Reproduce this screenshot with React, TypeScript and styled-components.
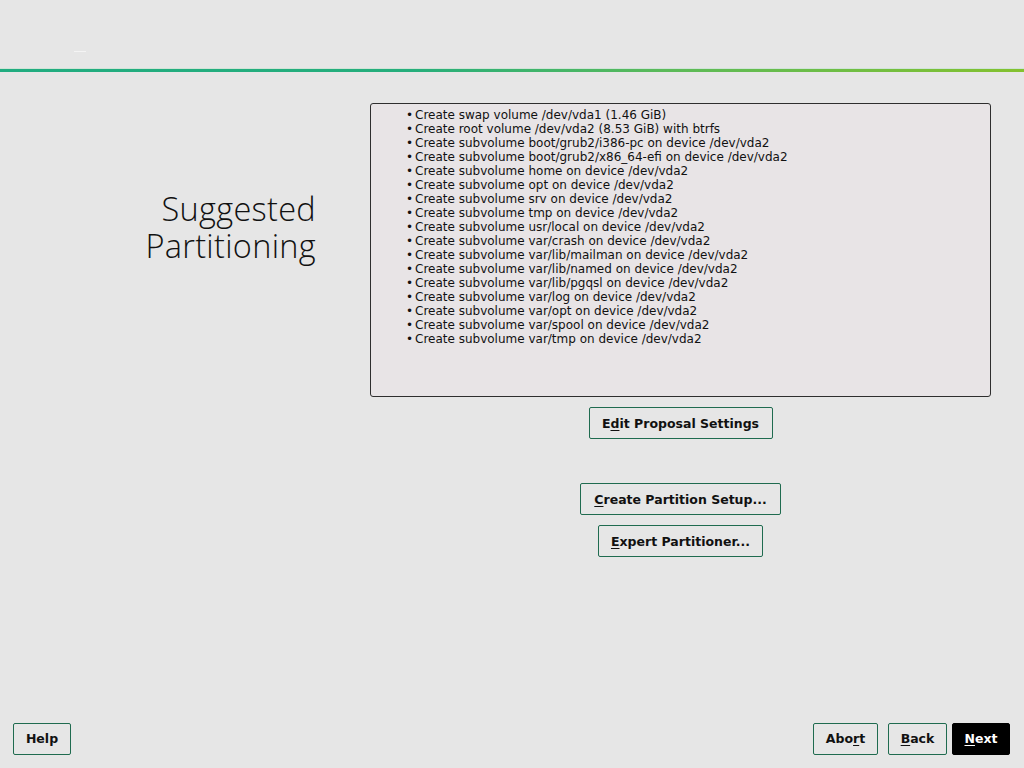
import React from 'react';
import styled, { createGlobalStyle } from 'styled-components';

const items = [
  'Create swap volume /dev/vda1 (1.46 GiB)',
  'Create root volume /dev/vda2 (8.53 GiB) with btrfs',
  'Create subvolume boot/grub2/i386-pc on device /dev/vda2',
  'Create subvolume boot/grub2/x86_64-efi on device /dev/vda2',
  'Create subvolume home on device /dev/vda2',
  'Create subvolume opt on device /dev/vda2',
  'Create subvolume srv on device /dev/vda2',
  'Create subvolume tmp on device /dev/vda2',
  'Create subvolume usr/local on device /dev/vda2',
  'Create subvolume var/crash on device /dev/vda2',
  'Create subvolume var/lib/mailman on device /dev/vda2',
  'Create subvolume var/lib/named on device /dev/vda2',
  'Create subvolume var/lib/pgqsl on device /dev/vda2',
  'Create subvolume var/log on device /dev/vda2',
  'Create subvolume var/opt on device /dev/vda2',
  'Create subvolume var/spool on device /dev/vda2',
  'Create subvolume var/tmp on device /dev/vda2',
];

// label with one underlined mnemonic letter
const Label = ({ text, at }: { text: string; at: number }) => (
  <>
    {text.slice(0, at)}
    <u>{text[at]}</u>
    {text.slice(at + 1)}
  </>
);

const App = () => {
  return (
    <>
      <GlobalStyle />
      <Page>
        <Header>
          <LogoMark />
        </Header>
        <Rule />
        <Main>
          <TitleCol>
            <Title>
              Suggested
              <br />
              Partitioning
            </Title>
          </TitleCol>
          <ContentCol>
            <Summary>
              <ul>
                {items.map((t) => (
                  <li key={t}>{t}</li>
                ))}
              </ul>
            </Summary>
            <ActionButton $width={184} style={{ marginTop: 10 }}>
              <Label text="Edit Proposal Settings" at={1} />
            </ActionButton>
            <ActionButton $width={201} style={{ marginTop: 44 }}>
              <Label text="Create Partition Setup..." at={0} />
            </ActionButton>
            <ActionButton $width={165} style={{ marginTop: 10 }}>
              <Label text="Expert Partitioner..." at={0} />
            </ActionButton>
          </ContentCol>
        </Main>
        <Footer>
          <NavButton $width={58}>Help</NavButton>
          <Spacer />
          <NavButton $width={65}>
            <Label text="Abort" at={3} />
          </NavButton>
          <NavButton $width={59} style={{ marginLeft: 10 }}>
            <Label text="Back" at={0} />
          </NavButton>
          <NavButton $width={58} $primary style={{ marginLeft: 5 }}>
            <Label text="Next" at={0} />
          </NavButton>
        </Footer>
      </Page>
    </>
  );
};

export default App;

const GlobalStyle = createGlobalStyle`
  html, body {
    margin: 0;
    padding: 0;
    background: #e6e6e6;
  }
  body {
    font-family: "DejaVu Sans", sans-serif;
  }
`;

const Page = styled.div`
  width: 1024px;
  height: 768px;
  display: flex;
  flex-direction: column;
  background: #e6e6e6;
  overflow: hidden;
`;

const Header = styled.div`
  height: 68px;
  position: relative;
`;

const LogoMark = styled.div`
  position: absolute;
  left: 74px;
  top: 51px;
  width: 12px;
  height: 1px;
  background: #f4f4f4;
`;

const Rule = styled.div`
  height: 3px;
  border-top: 1px solid #cfe4d6;
  background: linear-gradient(to right, #21ac80 0%, #25ae7c 40%, #5bba59 65%, #84c12f 100%);
`;

const Main = styled.div`
  flex: 1;
  display: flex;
  padding-top: 31px;
`;

const TitleCol = styled.div`
  width: 316px;
  display: flex;
  justify-content: flex-end;
  padding-top: 87px;
`;

const Title = styled.h1`
  margin: 0;
  text-align: right;
  font-family: "Open Sans", sans-serif;
  font-weight: 300;
  font-size: 32.5px;
  line-height: 37px;
  letter-spacing: 0.3px;
  color: #111;
`;

const ContentCol = styled.div`
  margin-left: 54px;
  width: 621px;
  display: flex;
  flex-direction: column;
  align-items: center;
`;

const Summary = styled.div`
  box-sizing: border-box;
  width: 621px;
  height: 294px;
  background: #e8e4e6;
  border: 1px solid #2e2e2e;
  border-radius: 3px;
  padding: 4px 0 0 0;
  font-size: 12px;
  line-height: 14px;
  color: #111;
  ul {
    margin: 0;
    padding-left: 35px;
    list-style: none;
  }
  li::before {
    content: '•';
    display: inline-block;
    width: 9px;
  }
`;

const ActionButton = styled.button<{ $width: number }>`
  box-sizing: border-box;
  width: ${(p) => p.$width}px;
  height: 32px;
  background: #e6e6e6;
  border: 1px solid #1f6b4f;
  border-radius: 2px;
  font-family: "DejaVu Sans", sans-serif;
  font-weight: bold;
  font-size: 12.5px;
  color: #111;
  padding: 0;
  u {
    text-underline-offset: 2px;
  }
`;

const Footer = styled.div`
  display: flex;
  align-items: center;
  padding: 0 14px 13px 13px;
`;

const Spacer = styled.div`
  flex: 1;
`;

const NavButton = styled.button<{ $width: number; $primary?: boolean }>`
  box-sizing: border-box;
  width: ${(p) => p.$width}px;
  height: 32px;
  background: ${(p) => (p.$primary ? '#000' : '#e6e6e6')};
  color: ${(p) => (p.$primary ? '#fff' : '#111')};
  border: 1px solid ${(p) => (p.$primary ? '#000' : '#1f6b4f')};
  border-radius: 2px;
  font-family: "DejaVu Sans", sans-serif;
  font-weight: bold;
  font-size: 12.5px;
  padding: 0 0 2px 0;
  u {
    text-underline-offset: 2px;
  }
`;
